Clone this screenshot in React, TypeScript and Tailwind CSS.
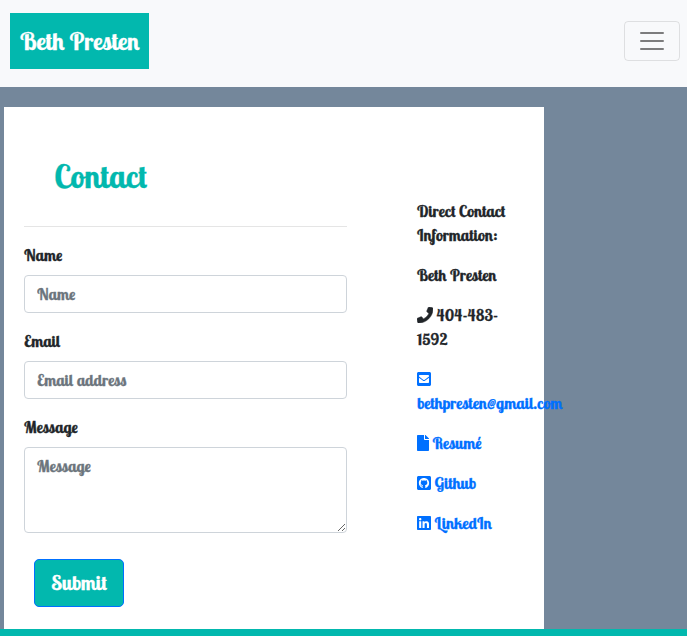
import React from "react";
import { FaPhone, FaEnvelopeSquare, FaFile, FaGithubSquare, FaLinkedin } from "react-icons/fa";

const field =
  "block w-full rounded border border-[#ced4da] bg-white px-3 py-[6px] text-base leading-6 placeholder:text-[#6c757d] placeholder:opacity-100 outline-none [-webkit-text-stroke:0.3px_#6c757d]";
const icon = "inline-block h-4 align-[-2px]";

export default function App() {
  return (
    <div className="h-[636px] w-full overflow-hidden bg-[#74879b] text-base leading-6 font-bold text-[#212529] [-webkit-text-stroke:0.3px_currentColor] [font-family:'Lobster_Two',Lobster,'Liberation_Serif',serif]">
      <nav className="flex h-[87px] items-start justify-between bg-[#f8f9fb] pl-[10px] pr-[7px]">
        <a className="mt-[13px] flex h-14 w-[139px] items-center whitespace-nowrap bg-[#02b8ae] pl-[10px] text-2xl text-white">
          Beth Presten
        </a>
        <button className="mt-[21px] flex h-10 w-14 items-center justify-center rounded border border-black/10">
          <svg viewBox="0 0 30 30" className="h-[30px] w-[30px]" fill="none" stroke="rgba(0,0,0,.5)" strokeWidth="2" strokeLinecap="round">
            <path d="M4 7h22M4 15h22M4 23h22" />
          </svg>
        </button>
      </nav>
      <main className="ml-1 mt-5 flex h-[522px] w-[540px] bg-white pl-5">
        <form className="w-[323px] shrink-0">
          <h1 className="ml-[30px] mt-[49px] h-[70px] text-[32px] leading-10 text-[#02b8ae]">Contact</h1>
          <hr className="mb-4 border-t border-black/10" />
          <div className="mb-4">
            <label className="mb-2 block">Name</label>
            <input className={field} placeholder="Name" />
          </div>
          <div className="mb-4">
            <label className="mb-2 block">Email</label>
            <input className={field} placeholder="Email address" />
          </div>
          <div>
            <label className="mb-2 block">Message</label>
            <textarea className={field + " h-[86px] resize-y"} placeholder="Message" />
          </div>
          <button type="button" className="ml-[10px] mt-[26px] flex h-12 w-[90px] items-center justify-center rounded-[5px] border border-[#0070ff] bg-[#02b8ae] text-xl text-white">
            Submit
          </button>
        </form>
        <aside className="ml-[70px] mt-[92px] flex w-[97px] flex-col gap-4">
          <p>Direct Contact<br />Information:</p>
          <p>Beth Presten</p>
          <p><FaPhone className={icon + " w-4 [stroke-width:20]"} /> 404-483-<br />1592</p>
          <p className="text-[#0070ff]">
            <FaEnvelopeSquare className={icon + " w-[14px]"} /><br />bethpresten@gmail.com
          </p>
          <p className="whitespace-nowrap text-[#0070ff]"><FaFile className={icon + " w-3"} /> Resumé</p>
          <p className="whitespace-nowrap text-[#0070ff]"><FaGithubSquare className={icon + " w-[14px]"} /> Github</p>
          <p className="whitespace-nowrap text-[#0070ff]"><FaLinkedin className={icon + " w-[14px]"} /> LinkedIn</p>
        </aside>
      </main>
      <footer className="h-[7px] bg-[#02b8ae]" />
    </div>
  );
}
